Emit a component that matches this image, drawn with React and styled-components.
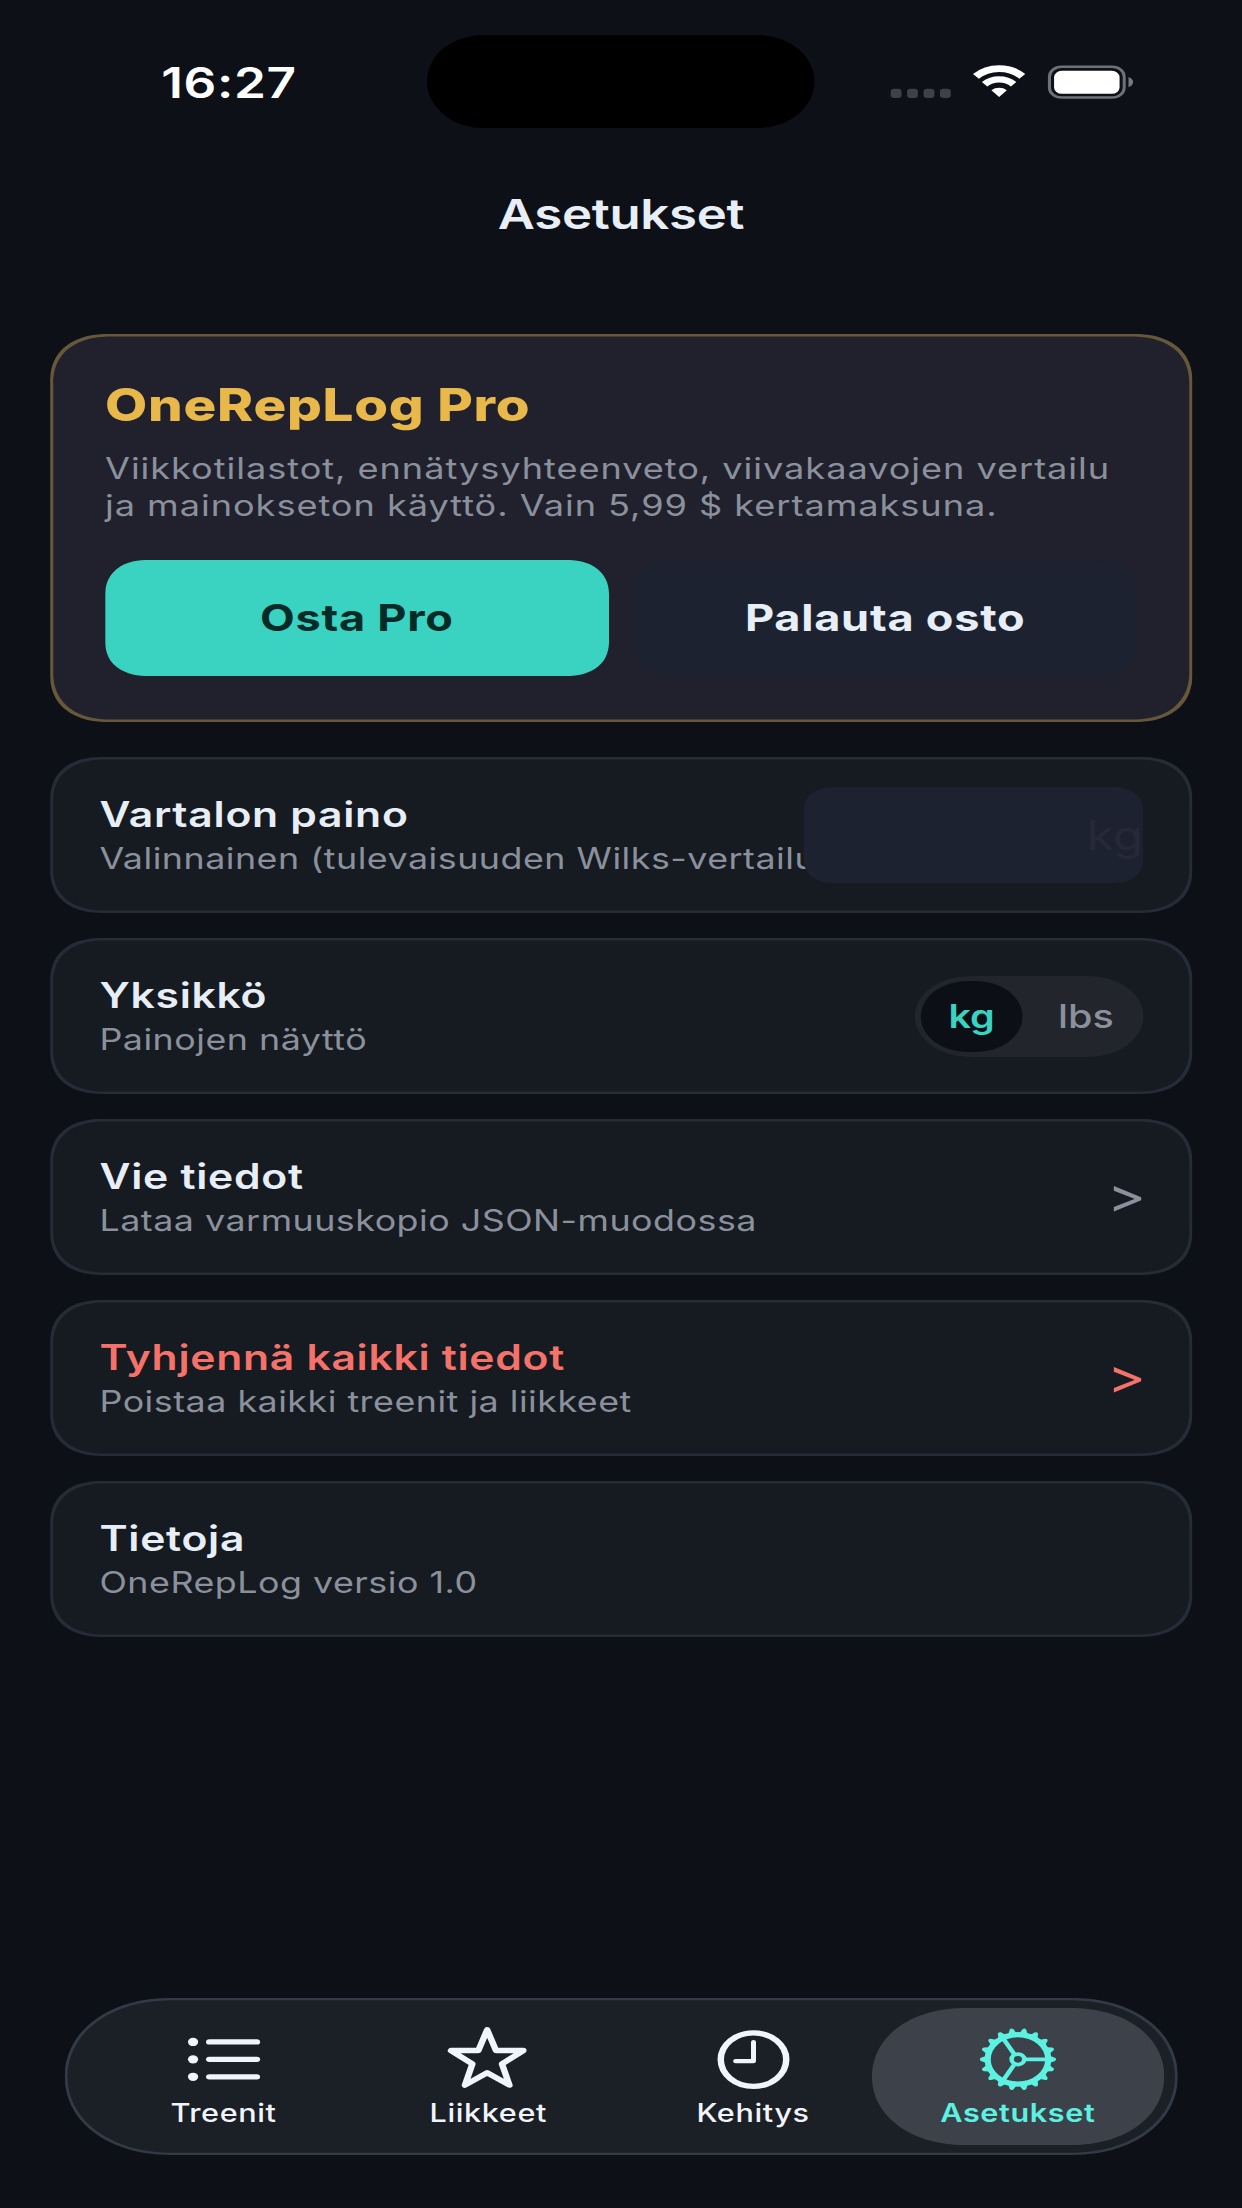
import { useState } from "react";
import styled, { createGlobalStyle } from "styled-components";

const GlobalStyle = createGlobalStyle`
  * {
    box-sizing: border-box;
  }

  body {
    margin: 0;
    background: #0d1017;
    overflow: hidden;
  }
`;

const Viewport = styled.div`
  width: 1242px;
  height: 2208px;
  overflow: hidden;
  background: #0d1017;
`;

// laid out in points (402 x 874) and stretched to the window
const Screen = styled.div`
  display: flex;
  flex-direction: column;
  width: 402px;
  height: 874px;
  zoom: 2.5263;
  transform: scaleX(1.22297);
  transform-origin: 0 0;
  background: #0d1017;
  color: #e8eef6;
  font-family: Inter, "Liberation Sans", sans-serif;
`;

const StatusBar = styled.header`
  display: grid;
  grid-template-columns: 138.2px 125.6px 1fr;
  height: 64px;
  padding-top: 13.9px;
`;

const Clock = styled.span`
  padding-left: 52.2px;
  padding-top: 8.3px;
  font-size: 16.6px;
  line-height: 21px;
  font-weight: 600;
  letter-spacing: 0.2px;
  color: #fff;
`;

const Island = styled.div`
  height: 36.7px;
  border-radius: 18.4px;
  background: #000;
`;

const StatusIcons = styled.svg`
  width: 80px;
  height: 16px;
  margin: 10.6px 0 0 23.2px;
`;

const Title = styled.h1`
  margin: 9.9px 0 0;
  font-size: 16.5px;
  line-height: 22px;
  font-weight: 600;
  letter-spacing: -0.1px;
  text-align: center;
`;

const Content = styled.main`
  display: flex;
  flex-direction: column;
  padding: 36.4px 16.2px 0;
`;

const ProCard = styled.section`
  height: 153.6px;
  padding: 17.4px 17.8px;
  border-radius: 19px;
  corner-shape: superellipse(1.2);
  background: #20212d;
  box-shadow: inset 0 0 0 1px #68583a;
`;

const ProTitle = styled.h2`
  margin: 0;
  font-size: 17.7px;
  line-height: 22px;
  font-weight: 800;
  letter-spacing: 0.24px;
  color: #e8b84a;
`;

const ProText = styled.p`
  margin: 6.4px 0 14.2px;
  font-size: 11.7px;
  line-height: 14.65px;
  letter-spacing: 0.31px;
  white-space: nowrap;
  color: #8b919c;
`;

const ProActions = styled.div`
  display: grid;
  grid-template-columns: 1fr 1fr;
  gap: 8px;
`;

const Button = styled.button`
  height: 46px;
  padding: 0;
  border: 0;
  border-radius: 14px;
  corner-shape: superellipse(1.2);
  font: inherit;
  font-size: 14.6px;
  font-weight: 700;
  letter-spacing: 0.24px;
  background: ${({ $primary }) => ($primary ? "#3ad2c1" : "#1c2230")};
  color: ${({ $primary }) => ($primary ? "#042b27" : "#e8eef6")};
`;

const Rows = styled.div`
  display: flex;
  flex-direction: column;
  gap: 10px;
  margin-top: 13.7px;
`;

const Row = styled.section`
  display: flex;
  align-items: center;
  justify-content: space-between;
  height: 61.65px;
  padding: 0 15.8px 0 16px;
  border-radius: 17px;
  corner-shape: superellipse(1.2);
  background: #161a21;
  box-shadow: inset 0 0 0 1px #252b37;
`;

const RowText = styled.div`
  min-width: 0;
  padding-top: 0.5px;
  white-space: nowrap;
`;

const RowTitle = styled.h3`
  margin: 0 0 2.2px;
  font-size: 13.8px;
  line-height: 17px;
  font-weight: 600;
  letter-spacing: 0.23px;
  color: ${({ $danger }) => ($danger ? "#f4726a" : "#e8eef6")};
`;

const RowSub = styled.p`
  margin: 0;
  font-size: 11.6px;
  line-height: 14.5px;
  letter-spacing: 0.16px;
  color: #8b919c;
`;

const WeightField = styled.div`
  flex: none;
  width: 110px;
  height: 38px;
  margin-top: 0.6px;
  border-radius: 10px;
  corner-shape: superellipse(1.2);
  background: #1c2230;
  font-size: 16px;
  line-height: 38.6px;
  text-align: right;
  color: #272936;
`;

const Segmented = styled.div`
  display: flex;
  flex: none;
  gap: 2px;
  width: 74px;
  height: 32px;
  margin-top: 0.6px;
  padding: 2px 0 2px 2px;
  border-radius: 18px / 16px;
  background: #22252b;
`;

const Segment = styled.button`
  flex: none;
  width: ${({ $first }) => ($first ? "33px" : "37px")};
  height: 28px;
  padding: 0;
  border: 0;
  border-radius: 15px / 14px;
  font: inherit;
  font-size: 12.8px;
  font-weight: ${({ $active }) => ($active ? 600 : 500)};
  background: ${({ $active }) => ($active ? "#0c0f16" : "transparent")};
  color: ${({ $active }) => ($active ? "#3ad2c1" : "#8b919c")};
`;

const Arrow = styled.span`
  margin-right: -1px;
  font-size: 19.2px;
  line-height: 20px;
  color: ${({ $danger }) => ($danger ? "#f4726a" : "#8b919c")};
`;

const TabBar = styled.nav`
  display: flex;
  width: 360px;
  height: 62.2px;
  margin: auto 0 21px 21.1px;
  padding: 4.2px 3.9px;
  border-radius: 34px / 31px;
  corner-shape: superellipse(1.06);
  background: #1b2026;
  box-shadow: inset 0 0 0 0.9px #323a47;
`;

const Tab = styled.button`
  display: flex;
  flex: none;
  flex-direction: column;
  align-items: center;
  width: 94.7px;
  height: 54px;
  margin-right: -9px;
  padding: 6.1px 0 0;
  border: 0;
  border-radius: 30px / 27px;
  corner-shape: superellipse(1.06);
  font: inherit;
  font-size: 9.9px;
  line-height: 12px;
  font-weight: ${({ $active }) => ($active ? 600 : 500)};
  letter-spacing: 0.2px;
  background: ${({ $active }) => ($active ? "#3d4149" : "transparent")};
  color: ${({ $active }) => ($active ? "#5cf2e2" : "#f1f5fb")};

  svg {
    flex: none;
    width: 28px;
    height: 28px;
    margin-bottom: 1.3px;
  }
`;

const ListIcon = () => (
  <svg viewBox="0 0 28 28" fill="currentColor">
    {[7.1, 14, 20.9].map((y) => (
      <g key={y}>
        <circle cx="4.3" cy={y} r="1.65" />
        <rect x="8.5" y={y - 1.05} width="17.5" height="2.1" rx="1.05" />
      </g>
    ))}
  </svg>
);

const StarIcon = () => (
  <svg viewBox="0.4 0 28 28" fill="none" stroke="currentColor" strokeWidth="2.1" strokeLinejoin="round">
    <path d="M14 2.3 16.87 10.5 25.7 10.5 18.8 15.8 21.2 24.2 14 19.3 6.8 24.2 9.2 15.8 2.3 10.5 11.13 10.5Z" />
  </svg>
);

const ClockIcon = () => (
  <svg viewBox="0 0 28 28" fill="none" stroke="currentColor" strokeLinecap="round" strokeLinejoin="round">
    <circle cx="14.3" cy="14.1" r="10.6" strokeWidth="2.1" />
    <path d="M14.3 7.1V14.7H8.5" strokeWidth="1.6" />
  </svg>
);

const TEETH = Array.from({ length: 18 }, (_, i) => i * 20);

const GearIcon = () => (
  <svg viewBox="0 0 28 28" fill="none" stroke="currentColor">
    <circle cx="14" cy="14" r="9.8" strokeWidth="2" />
    <circle cx="14" cy="14" r="2.05" strokeWidth="1.5" />
    {TEETH.map((deg) => (
      <path
        key={deg}
        d="M24.2 12.6 26 13.4Q26.7 14 26 14.6L24.2 15.4Z"
        fill="currentColor"
        stroke="none"
        transform={`rotate(${deg} 14 14)`}
      />
    ))}
    {[0, 120, 240].map((deg) => (
      <path key={deg} d="M16.6 14H23.2" strokeWidth="1.5" transform={`rotate(${deg} 14 14)`} />
    ))}
  </svg>
);

const TABS = [
  { label: "Treenit", Icon: ListIcon },
  { label: "Liikkeet", Icon: StarIcon },
  { label: "Kehitys", Icon: ClockIcon },
  { label: "Asetukset", Icon: GearIcon },
];

function SettingRow({ title, sub, danger, children }) {
  return (
    <Row>
      <RowText>
        <RowTitle $danger={danger}>{title}</RowTitle>
        <RowSub>{sub}</RowSub>
      </RowText>
      {children}
    </Row>
  );
}

function App() {
  const [unit, setUnit] = useState("kg");
  const [tab, setTab] = useState("Asetukset");

  return (
    <Viewport>
      <GlobalStyle />
      <Screen>
        <StatusBar>
          <Clock>16:27</Clock>
          <Island />
          <StatusIcons viewBox="0 0 80 16">
            <g fill="#3f4147">
              {[1.3, 6.6, 11.95, 17.25].map((x) => (
                <rect key={x} x={x} y="10.6" width="3.5" height="3.7" rx="1.1" />
              ))}
            </g>
            <g fill="none" stroke="#fff">
              <path d="M28.9 5.7A10.6 10.6 0 0 1 43.9 5.7" strokeWidth="2.7" />
              <path d="M31.7 8.8A6.7 6.7 0 0 1 41.1 8.8" strokeWidth="2.5" />
            </g>
            <path d="M33.9 11.2A3.7 3.7 0 0 1 38.9 11.2L36.4 13.9Z" fill="#fff" />
            <rect x="52.7" y="1.9" width="24.2" height="12.2" rx="3.9" fill="none" stroke="#6f7176" />
            <rect x="54.2" y="3.5" width="21.2" height="9.1" rx="2.5" fill="#fff" />
            <path d="M78.3 5.9V10Q79.8 9.3 79.8 7.95T78.3 5.9Z" fill="#77797e" />
          </StatusIcons>
        </StatusBar>
        <Title>Asetukset</Title>

        <Content>
          <ProCard>
            <ProTitle>OneRepLog Pro</ProTitle>
            <ProText>
              Viikkotilastot, ennätysyhteenveto, viivakaavojen vertailu
              <br />
              ja mainokseton käyttö. Vain 5,99 $ kertamaksuna.
            </ProText>
            <ProActions>
              <Button $primary>Osta Pro</Button>
              <Button>Palauta osto</Button>
            </ProActions>
          </ProCard>

          <Rows>
            <SettingRow title="Vartalon paino" sub="Valinnainen (tulevaisuuden Wilks-vertailu">
              <WeightField>kg</WeightField>
            </SettingRow>
            <SettingRow title="Yksikkö" sub="Painojen näyttö">
              <Segmented>
                {["kg", "lbs"].map((u, i) => (
                  <Segment key={u} $first={i === 0} $active={unit === u} onClick={() => setUnit(u)}>
                    {u}
                  </Segment>
                ))}
              </Segmented>
            </SettingRow>
            <SettingRow title="Vie tiedot" sub="Lataa varmuuskopio JSON-muodossa">
              <Arrow>&gt;</Arrow>
            </SettingRow>
            <SettingRow title="Tyhjennä kaikki tiedot" sub="Poistaa kaikki treenit ja liikkeet" danger>
              <Arrow $danger>&gt;</Arrow>
            </SettingRow>
            <SettingRow title="Tietoja" sub="OneRepLog versio 1.0" />
          </Rows>
        </Content>

        <TabBar>
          {TABS.map(({ label, Icon }) => (
            <Tab key={label} $active={tab === label} onClick={() => setTab(label)}>
              <Icon />
              {label}
            </Tab>
          ))}
        </TabBar>
      </Screen>
    </Viewport>
  );
}

export default App;
